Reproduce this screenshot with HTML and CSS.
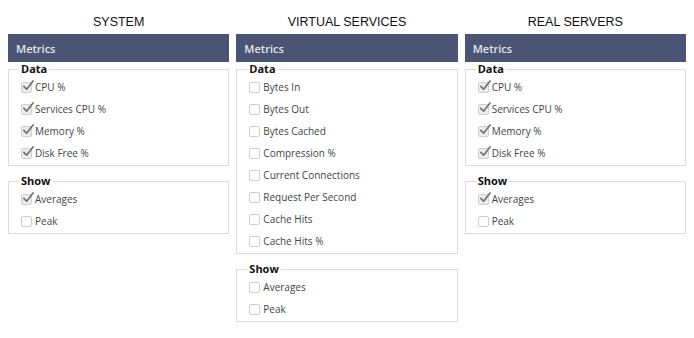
FILE: index.html
```html
<!DOCTYPE html>
<html lang="en">
<head>
    <meta charset="UTF-8">
    <title>Metrics</title>
    <link rel="stylesheet" href="styles.css">
</head>
<body>
    <div class="columns">
        <div class="col">
            <h2>SYSTEM</h2>
            <div class="bar">Metrics</div>
            <fieldset>
                <legend>Data</legend>
                <label class="row"><span class="box on"><svg viewBox="0 0 13 13"><path d="M2 7 L5 10 L12 1"/></svg></span>CPU %</label>
                <label class="row"><span class="box on"><svg viewBox="0 0 13 13"><path d="M2 7 L5 10 L12 1"/></svg></span>Services CPU %</label>
                <label class="row"><span class="box on"><svg viewBox="0 0 13 13"><path d="M2 7 L5 10 L12 1"/></svg></span>Memory %</label>
                <label class="row"><span class="box on"><svg viewBox="0 0 13 13"><path d="M2 7 L5 10 L12 1"/></svg></span>Disk Free %</label>
            </fieldset>
            <fieldset>
                <legend>Show</legend>
                <label class="row"><span class="box on"><svg viewBox="0 0 13 13"><path d="M2 7 L5 10 L12 1"/></svg></span>Averages</label>
                <label class="row"><span class="box"></span>Peak</label>
            </fieldset>
        </div>

        <div class="col">
            <h2>VIRTUAL SERVICES</h2>
            <div class="bar">Metrics</div>
            <fieldset>
                <legend>Data</legend>
                <label class="row"><span class="box"></span>Bytes In</label>
                <label class="row"><span class="box"></span>Bytes Out</label>
                <label class="row"><span class="box"></span>Bytes Cached</label>
                <label class="row"><span class="box"></span>Compression %</label>
                <label class="row"><span class="box"></span>Current Connections</label>
                <label class="row"><span class="box"></span>Request Per Second</label>
                <label class="row"><span class="box"></span>Cache Hits</label>
                <label class="row"><span class="box"></span>Cache Hits %</label>
            </fieldset>
            <fieldset>
                <legend>Show</legend>
                <label class="row"><span class="box"></span>Averages</label>
                <label class="row"><span class="box"></span>Peak</label>
            </fieldset>
        </div>

        <div class="col">
            <h2>REAL SERVERS</h2>
            <div class="bar">Metrics</div>
            <fieldset>
                <legend>Data</legend>
                <label class="row"><span class="box on"><svg viewBox="0 0 13 13"><path d="M2 7 L5 10 L12 1"/></svg></span>CPU %</label>
                <label class="row"><span class="box on"><svg viewBox="0 0 13 13"><path d="M2 7 L5 10 L12 1"/></svg></span>Services CPU %</label>
                <label class="row"><span class="box on"><svg viewBox="0 0 13 13"><path d="M2 7 L5 10 L12 1"/></svg></span>Memory %</label>
                <label class="row"><span class="box on"><svg viewBox="0 0 13 13"><path d="M2 7 L5 10 L12 1"/></svg></span>Disk Free %</label>
            </fieldset>
            <fieldset>
                <legend>Show</legend>
                <label class="row"><span class="box on"><svg viewBox="0 0 13 13"><path d="M2 7 L5 10 L12 1"/></svg></span>Averages</label>
                <label class="row"><span class="box"></span>Peak</label>
            </fieldset>
        </div>
    </div>
</body>
</html>
```

FILE: styles.css
```css
* {
    box-sizing: border-box;
}

body {
    margin: 8px;
    background: #fff;
    color: #333;
    font-family: 'Open Sans', sans-serif;
}

.columns {
    display: grid;
    grid-template-columns: repeat(3, 1fr);
    gap: 7px;
}

h2 {
    margin: 0;
    height: 26px;
    text-align: center;
    font: normal 12.5px/29px 'Liberation Sans', Arial, sans-serif;
    color: #111;
}

.bar {
    height: 28px;
    padding: 1px 0 0 8px;
    background-color: #4b5475;
    color: #e2e4ec;
    font-size: 11px;
    font-weight: 600;
    line-height: 27px;
}

fieldset {
    margin: 0 0 8px;
    padding: 0 10px 1px 12px;
    border: 1px solid #dcdcdc;
    min-width: 0;
}

legend {
    padding: 0 2px;
    margin-left: -2px;
    font-size: 11px;
    font-weight: 700;
    line-height: 14px;
    color: #111;
}

.row {
    display: flex;
    align-items: center;
    height: 22px;
    font-size: 10px;
    color: #444;
}

.box {
    position: relative;
    flex: none;
    width: 11px;
    height: 11px;
    margin-right: 3px;
    border: 1px solid #cfcfcf;
    border-radius: 2px;
    background: #fff;
}

.box.on {
    background: #ececec;
}

/* grey tick drawn over the checked boxes */
.box svg {
    position: absolute;
    left: 0;
    top: -3px;
    width: 12px;
    height: 12px;
    fill: none;
    stroke: #707070;
    stroke-width: 1.8;
    stroke-linecap: round;
    stroke-linejoin: round;
}
```
